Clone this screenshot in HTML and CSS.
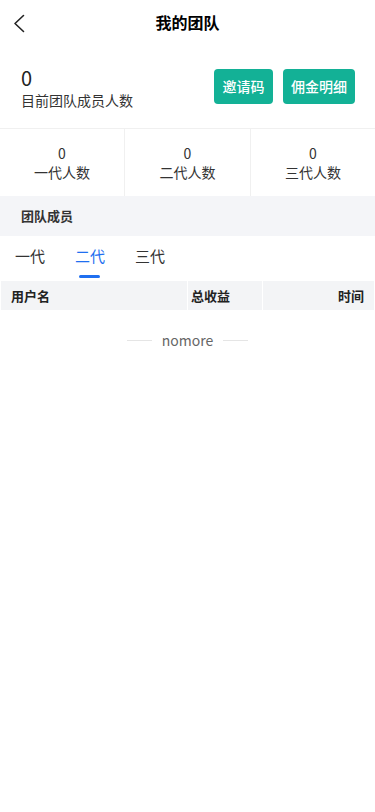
FILE: index.html
```html
<!DOCTYPE html>
<html lang="zh-CN">
<head>
    <meta charset="UTF-8">
    <title>我的团队</title>
    <link rel="stylesheet" href="styles.css">
</head>
<body>
    <div class="nav">
        <div class="back">
            <svg width="12" height="19" viewBox="0 0 12 19"><path d="M10.5 1.5 L2 9.5 L10.5 17.5" fill="none" stroke="#222" stroke-width="1.6" stroke-linecap="round" stroke-linejoin="round"/></svg>
        </div>
        <div class="nav-title">我的团队</div>
        <div></div>
    </div>

    <div class="summary">
        <div class="total">
            <div class="total-num">0</div>
            <div class="total-label">目前团队成员人数</div>
        </div>
        <div class="actions">
            <div class="btn btn-invite">邀请码</div>
            <div class="btn btn-detail">佣金明细</div>
        </div>
    </div>

    <div class="stats">
        <div class="stat">
            <div>0</div>
            <div>一代人数</div>
        </div>
        <div class="stat">
            <div>0</div>
            <div>二代人数</div>
        </div>
        <div class="stat">
            <div>0</div>
            <div>三代人数</div>
        </div>
    </div>

    <div class="section-title">团队成员</div>

    <div class="tabs">
        <div class="tab">一代</div>
        <div class="tab active">二代</div>
        <div class="tab">三代</div>
    </div>

    <div class="thead">
        <div class="th th-user">用户名</div>
        <div class="th th-income">总收益</div>
        <div class="th th-time">时间</div>
    </div>

    <div class="nomore">
        <span class="line"></span>
        <span>nomore</span>
        <span class="line"></span>
    </div>
</body>
</html>
```

FILE: styles.css
```css
html, body {
    padding:0px;
    margin:0px;
    background:#fff;
    font-family:"Noto Sans CJK SC", "Noto Sans", sans-serif;
    color:#333;
}

.nav {
    height:44px;
    display:grid;
    grid-template-columns:44px 1fr 44px;
    align-items:center;
}

.back {
    padding-left:13px;
    padding-top:2px;
    display:flex;
    align-items:center;
}

.nav-title {
    text-align:center;
    font-size:16px;
    font-weight:bold;
    color:#000;
}

.summary {
    height:84px;
    display:flex;
    align-items:center;
    justify-content:space-between;
    padding:0 20px 0 21px;
}

.total {
    padding-top:4px;
}

.total-num {
    font-size:20px;
    line-height:24px;
    color:#222;
}

.total-label {
    font-size:14px;
    line-height:20px;
}

.actions {
    display:flex;
    gap:10px;
}

.btn {
    height:35px;
    line-height:35px;
    text-align:center;
    border-radius:4px;
    background:#13b196;
    color:#fff;
    font-size:14px;
    font-weight:500;
}

.btn-invite {
    width:59px;
}

.btn-detail {
    width:72px;
}

.stats {
    display:grid;
    grid-template-columns:124px 1fr 125px;
    border-top:1px solid #f0f0f0;
}

.stat {
    height:67px;
    display:flex;
    flex-direction:column;
    justify-content:center;
    align-items:center;
    font-size:14px;
    line-height:19px;
}

.stat + .stat {
    border-left:1px solid #f0f0f0;
}

.section-title {
    height:40px;
    line-height:40px;
    background:#f4f5f8;
    padding-left:21px;
    font-size:13px;
    font-weight:bold;
}

.tabs {
    height:44px;
    display:flex;
    gap:30px;
    padding-left:15px;
}

.tab {
    position:relative;
    font-size:15px;
    line-height:40px;
}

.tab.active {
    color:#1f6ff0;
}

.tab.active::after {
    content:'';
    position:absolute;
    left:4px;
    right:5px;
    bottom:2px;
    height:3px;
    border-radius:2px;
    background:#1f6ff0;
}

.thead {
    display:grid;
    grid-template-columns:186px 74px 1fr;
    gap:1px;
    padding:1px 1px 0 1px;
}

.th {
    height:29px;
    line-height:29px;
    background:#f3f4f6;
    font-size:13px;
    font-weight:bold;
    color:#222;
}

.th-user {
    padding-left:10px;
}

.th-income {
    padding-left:3px;
}

.th-time {
    text-align:right;
    padding-right:10px;
}

.nomore {
    display:flex;
    justify-content:center;
    align-items:center;
    gap:10px;
    margin-top:20px;
    font-size:14px;
    color:#666;
}

.line {
    width:25px;
    height:1px;
    background:#e5e5e5;
}
```
